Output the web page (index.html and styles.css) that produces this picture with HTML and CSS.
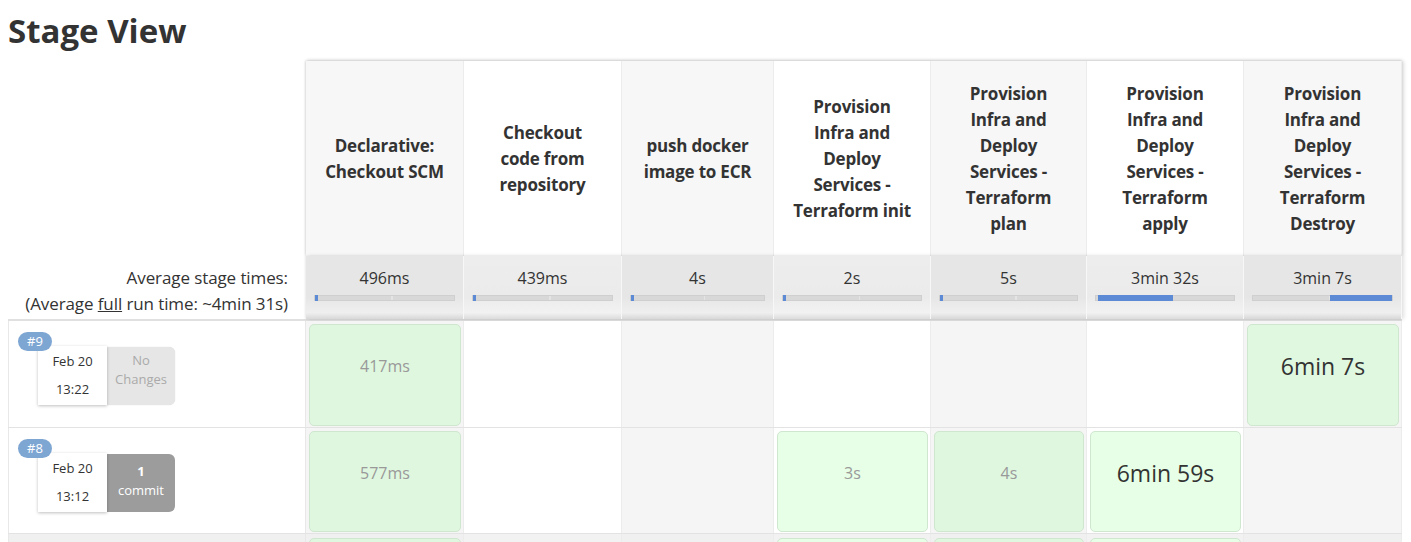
FILE: index.html
```html
<!DOCTYPE html>
<html>
<head>
<meta charset="utf-8">
<link rel="stylesheet" href="styles.css">
</head>
<body>
<h2 class="title">Stage View</h2>
<div class="table">
  <div class="head-row">
    <div class="left-spacer"></div>
    <div class="stages head">
      <div class="hcell c1 odd"><span>Declarative: Checkout SCM</span></div>
      <div class="hcell c2"><span>Checkout code from repository</span></div>
      <div class="hcell c3 odd"><span>push docker image to ECR</span></div>
      <div class="hcell c4"><span>Provision Infra and Deploy Services - Terraform init</span></div>
      <div class="hcell c5 odd"><span>Provision Infra and Deploy Services - Terraform plan</span></div>
      <div class="hcell c6"><span>Provision Infra and Deploy Services - Terraform apply</span></div>
      <div class="hcell c7 odd"><span>Provision Infra and Deploy Services - Terraform Destroy</span></div>
    </div>
  </div>
  <div class="avg-row">
    <div class="avg-label">
      <div>Average stage times:</div>
      <div>(Average <u>full</u> run time: ~4min 31s)</div>
    </div>
    <div class="stages avg">
      <div class="acell c1 odd"><div class="atime">496ms</div><div class="bar"><div class="fill" style="left:0%;width:2%"></div></div></div>
      <div class="acell c2"><div class="atime">439ms</div><div class="bar"><div class="fill" style="left:0%;width:2%"></div></div></div>
      <div class="acell c3 odd"><div class="atime">4s</div><div class="bar"><div class="fill" style="left:0%;width:2%"></div></div></div>
      <div class="acell c4"><div class="atime">2s</div><div class="bar"><div class="fill" style="left:0%;width:2%"></div></div></div>
      <div class="acell c5 odd"><div class="atime">5s</div><div class="bar"><div class="fill" style="left:0%;width:2%"></div></div></div>
      <div class="acell c6"><div class="atime">3min 32s</div><div class="bar"><div class="fill" style="left:1.5%;width:54.5%"></div></div></div>
      <div class="acell c7 odd"><div class="atime">3min 7s</div><div class="bar"><div class="fill" style="left:55.5%;width:44.5%"></div></div></div>
    </div>
  </div>
  <div class="run-row">
    <div class="run-left">
      <div class="badge">#9</div>
      <div class="run-info">
        <div class="date"><div>Feb 20</div><div>13:22</div></div>
        <div class="changes none">No<br>Changes</div>
      </div>
    </div>
    <div class="stages">
      <div class="scell c1 odd"><div class="box g1">417ms</div></div>
      <div class="scell c2"></div>
      <div class="scell c3 odd"></div>
      <div class="scell c4"></div>
      <div class="scell c5 odd"></div>
      <div class="scell c6"></div>
      <div class="scell c7 odd"><div class="box g2 long">6min 7s</div></div>
    </div>
  </div>
  <div class="run-row">
    <div class="run-left">
      <div class="badge">#8</div>
      <div class="run-info">
        <div class="date"><div>Feb 20</div><div>13:12</div></div>
        <div class="changes some"><b>1</b><br>commit</div>
      </div>
    </div>
    <div class="stages">
      <div class="scell c1 odd"><div class="box g1">577ms</div></div>
      <div class="scell c2"></div>
      <div class="scell c3 odd"></div>
      <div class="scell c4"><div class="box g3">3s</div></div>
      <div class="scell c5 odd"><div class="box g1">4s</div></div>
      <div class="scell c6"><div class="box g3 long">6min 59s</div></div>
      <div class="scell c7 odd"></div>
    </div>
  </div>
  <div class="run-row partial">
    <div class="run-left gray"></div>
    <div class="stages">
      <div class="scell c1 odd"><div class="box g1"></div></div>
      <div class="scell c2"></div>
      <div class="scell c3 odd"></div>
      <div class="scell c4"><div class="box g3"></div></div>
      <div class="scell c5 odd"><div class="box g1"></div></div>
      <div class="scell c6"><div class="box g3"></div></div>
      <div class="scell c7 odd"></div>
    </div>
  </div>
</div>
</body>
</html>
```
FILE: styles.css
```css
html, body {
  margin: 0;
  padding: 0;
  background: #fff;
}
body {
  margin: 0 0 0 8px;
  font-family: "Open Sans", "Noto Sans", sans-serif;
  color: #333;
  overflow: hidden;
}
.title {
  margin: 0;
  padding-top: 8px;
  height: 53px;
  font-size: 33px;
  line-height: 46px;
  font-weight: 700;
  letter-spacing: 0;
  color: #333;
}
.table {
  width: 1394px;
}
.head-row, .avg-row, .run-row {
  display: flex;
}
.left-spacer, .avg-label, .run-left {
  width: 298px;
  flex: none;
}
.stages {
  display: flex;
}
.stages > div {
  flex: none;
  box-sizing: border-box;
}
.c1 { width: 158px; }
.c2 { width: 158px; }
.c3 { width: 152px; }
.c4 { width: 157px; }
.c5 { width: 156px; }
.c6 { width: 157px; }
.c7 { width: 158px; }

.head {
  box-shadow: 0 -1px 3px rgba(0,0,0,0.12), 2px 0 4px rgba(0,0,0,0.12), -1px 0 2px rgba(0,0,0,0.08);
}
.hcell {
  height: 195px;
  display: flex;
  align-items: center;
  justify-content: center;
  text-align: center;
  padding: 0 18px;
  background: #fff;
  border-right: 1px solid #ececec;
  font-size: 17px;
  line-height: 26px;
  font-weight: 700;
  color: #333;
  letter-spacing: -0.2px;
}
.hcell.odd { background: #f7f7f7; }

.avg-label {
  box-sizing: border-box;
  padding-right: 18px;
  text-align: right;
  font-size: 17px;
  line-height: 26px;
  padding-top: 9px;
  color: #333;
  letter-spacing: -0.1px;
}
.avg {
  box-shadow: 2px 0 4px rgba(0,0,0,0.12), -1px 0 2px rgba(0,0,0,0.08);
}
.acell {
  height: 63px;
  background: linear-gradient(#ededed 0%, #ebebeb 65%, #f2f2f2 90%, #dcdcdc 100%);
  border-right: 1px solid #f7f7f7;
  padding: 0 8px;
  text-align: center;
}
.acell.odd {
  background: linear-gradient(#e6e6e6 0%, #e6e6e6 65%, #efefef 90%, #d8d8d8 100%);
}
.atime {
  font-size: 16px;
  line-height: 20px;
  padding-top: 12px;
  height: 24px;
  color: #333;
}
.bar {
  position: relative;
  height: 6px;
  background: #d8d8d8;
  border: 1px solid #cfcfcf;
  box-sizing: border-box;
  margin-top: 3px;
  background-image: linear-gradient(90deg, transparent 55%, #e4e4e4 55%, #e4e4e4 56%, transparent 56%);
}
.fill {
  position: absolute;
  top: -1px;
  bottom: -1px;
  background: #5d8ad4;
  min-width: 3px;
}

.run-row {
  height: 106px;
  border-top: 1px solid #e3e3e3;
  box-sizing: border-box;
}
.avg-row + .run-row {
  height: 108px;
  border-top: 2px solid #e0e0e0;
}
.run-left {
  box-sizing: border-box;
  border-left: 1px solid #e8e8e8;
  border-right: 1px solid #e8e8e8;
  padding: 10px 0 0 10px;
  position: relative;
  background: #fff;
}
.run-left.gray { background: #f0f0f0; }
.badge {
  position: absolute;
  left: 9px;
  top: 11px;
  width: 34px;
  height: 19px;
  border-radius: 10px;
  background: #7ea6d3;
  color: #fff;
  font-size: 13px;
  line-height: 19px;
  text-align: center;
  z-index: 2;
}
.run-info {
  display: flex;
  margin: 15px 0 0 19px;
}
.date {
  width: 69px;
  height: 59px;
  background: #fff;
  box-shadow: 0 1px 3px rgba(0,0,0,0.25);
  font-size: 13px;
  line-height: 28px;
  text-align: center;
  padding-top: 1px;
  box-sizing: border-box;
  color: #333;
  position: relative;
  z-index: 1;
}
.changes {
  width: 68px;
  height: 58px;
  margin-top: 1px;
  border-radius: 0 6px 6px 0;
  font-size: 13px;
  line-height: 19px;
  text-align: center;
  box-sizing: border-box;
  padding-top: 4px;
}
.changes.none {
  background: #e6e6e6;
  color: #aaa;
  box-shadow: 0 0 1px rgba(0,0,0,0.2);
}
.changes.some {
  background: #9c9c9c;
  color: #fff;
  padding-top: 8px;
}

.scell {
  height: 100%;
  background: #fff;
  border-right: 1px solid #ececec;
  padding: 3px 2px 1px 3px;
}
.scell.odd { background: #f5f5f5; }
.box {
  height: 100%;
  box-sizing: border-box;
  border: 1px solid #cfe6cf;
  border-radius: 5px;
  display: flex;
  align-items: center;
  justify-content: center;
  padding-bottom: 18px;
  font-size: 16px;
  color: #999;
}
.box.g1 { background: #dff7df; }
.box.g2 { background: #e0f8e0; }
.box.g3 { background: #e6ffe6; }
.box.long {
  font-size: 23px;
  color: #333;
}
.partial .scell { padding-top: 4px; }
.partial .scell, .partial .run-left { background-color: #f0f0f0; }
.partial .scell.c2, .partial .scell.c4, .partial .scell.c6 { background: #f2f2f2; }
```
